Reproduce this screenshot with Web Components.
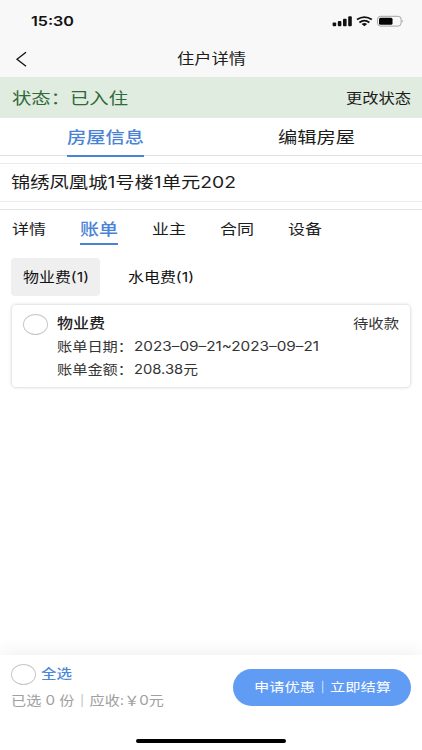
<!DOCTYPE html>
<html lang="zh-CN">
<head>
<meta charset="utf-8">
<title>住户详情</title>
<style>
  body {
    margin: 0;
    background: #fff;
    font-family: Inter, "Noto Sans CJK SC", sans-serif;
    color: #1c1c1c;
  }
</style>
</head>
<body>
<resident-page></resident-page>

<script>
const define = (name, html, setup) => {
  const template = document.createElement("template");
  template.innerHTML = html;
  customElements.define(name, class extends HTMLElement {
    connectedCallback() {
      if (this.shadowRoot) return;
      this.attachShadow({ mode: "open" });
      this.shadowRoot.appendChild(template.content.cloneNode(true));
      if (setup) setup(this, this.shadowRoot);
    }
  });
};

// One line of text, stretched sideways to fill the given width
define("wide-text", `
<style>
  :host { display: block; flex: none; line-height: 20px; height: 20px; }
  span { display: inline-block; white-space: pre; transform-origin: 0 50%; vertical-align: top; }
</style>
<span></span>
`, (host, root) => {
  const span = root.querySelector("span");
  const width = Number(host.getAttribute("width"));
  span.textContent = host.getAttribute("text");
  host.style.width = width + "px";
  host.style.fontSize = host.getAttribute("size") + "px";
  span.style.transform = `scaleX(${width / span.getBoundingClientRect().width})`;
});

define("round-check", `
<style>
  :host { display: block; flex: none; box-sizing: border-box; width: 25px; height: 21px; border: 1px solid #c8c8c8; border-radius: 50%; background: #fff; }
</style>
`);

define("phone-status", `
<style>
  :host { display: flex; justify-content: space-between; height: 41px; padding: 0 18px 0 31px; align-items: center; color: #111; }
  wide-text { font-weight: 600; }
  svg { display: block; }
</style>
<wide-text text="15:30" size="13" width="43"></wide-text>
<svg width="73" height="14" viewBox="0 0 73 14">
  <g fill="#111">
    <rect x="1.6" y="8.6" width="3.6" height="3.6" rx="1" />
    <rect x="6.8" y="7" width="3.6" height="5.2" rx="1" />
    <rect x="12" y="4.7" width="3.6" height="7.5" rx="1" />
    <rect x="17.2" y="2.3" width="3.6" height="9.9" rx="1" />
    <path d="M33.4 12.2 L30.6 10 Q33.4 8.2 36.2 10 Z" />
  </g>
  <g fill="none" stroke="#111" stroke-width="1.8">
    <path d="M26 5.6 Q33.4 .6 40.8 5.6" />
    <path d="M28.4 8.4 Q33.4 4.8 38.4 8.4" />
  </g>
  <rect x="46.5" y="2.3" width="23.6" height="9.8" rx="3" fill="none" stroke="#a6a6a6" />
  <rect x="48" y="3.7" width="13.5" height="7" rx="1.5" fill="#050505" />
  <path d="M71.3 5.5 Q73 7.1 71.3 8.7Z" fill="#999" />
</svg>
`);

define("nav-bar", `
<style>
  :host { display: grid; grid-template-columns: 1fr auto 1fr; align-items: center; height: 36px; padding: 0 15px; }
  svg { display: block; }
</style>
<svg width="13" height="16" viewBox="0 0 13 16">
  <path d="M11 1.2 L2 8.2 L11 15.2" fill="none" stroke="#111" stroke-width="1.3" />
</svg>
<wide-text text="住户详情" size="14.5" width="69"></wide-text>
`);

define("state-bar", `
<style>
  :host { display: flex; justify-content: space-between; align-items: center; height: 41px; padding: 0 11px 0 12px; background: #e0ecdf; }
  .state { color: #2f6a3b; }
</style>
<wide-text class="state" text="状态：已入住" size="16" width="116"></wide-text>
<wide-text text="更改状态" size="13.5" width="65"></wide-text>
`);

define("tab-item", `
<style>
  :host { display: flex; box-sizing: border-box; align-items: flex-start; border-bottom: 2px solid transparent; }
  :host([active]) { color: #4a83d6; border-color: #4a83d6; font-weight: 500; }
</style>
<slot></slot>
`);

define("house-tabs", `
<style>
  :host { display: grid; grid-template-columns: 1fr 1fr; justify-items: center; box-sizing: border-box; height: 38px; padding-top: 9px; border-bottom: 1px solid #e2e2e4; }
  tab-item { height: 30px; }
</style>
<tab-item active><wide-text text="房屋信息" size="16" width="77"></wide-text></tab-item>
<tab-item><wide-text text="编辑房屋" size="16" width="77"></wide-text></tab-item>
`);

define("house-name", `
<style>
  :host { display: flex; box-sizing: border-box; height: 39px; margin: 7px 0; padding: 0 11px 1px; align-items: center; border: solid #ebebed; border-width: 1px 0; }
</style>
<wide-text text="锦绣凤凰城1号楼1单元202" size="16" width="225"></wide-text>
`);

define("detail-tabs", `
<style>
  :host { display: flex; box-sizing: border-box; height: 37px; gap: 34px; padding: 9px 12px 0; border-top: 1px solid #e3e3e5; }
  tab-item { height: 26px; }
</style>
<tab-item><wide-text text="详情" size="14" width="34"></wide-text></tab-item>
<tab-item active><wide-text text="账单" size="16" width="38"></wide-text></tab-item>
<tab-item><wide-text text="业主" size="14" width="34"></wide-text></tab-item>
<tab-item><wide-text text="合同" size="14" width="34"></wide-text></tab-item>
<tab-item><wide-text text="设备" size="14" width="34"></wide-text></tab-item>
`);

define("fee-types", `
<style>
  :host { display: flex; gap: 16px; padding: 12px 11px 0; color: #111; }
  div { display: flex; box-sizing: border-box; width: 89px; height: 38px; padding: 0 0 1px 12px; align-items: center; border-radius: 4px; }
  .on { background: #efefef; }
</style>
<div class="on"><wide-text text="物业费(1)" size="13.5" width="66"></wide-text></div>
<div><wide-text text="水电费(1)" size="13.5" width="66"></wide-text></div>
`);

define("bill-card", `
<style>
  :host { display: grid; grid-template-columns: 34px 1fr; box-sizing: border-box; height: 84px; margin: 8px 11px 0; padding: 8px 11px 0; border: 1px solid #e9e9e9; border-radius: 5px; box-shadow: 0 0 3px rgba(0,0,0,.12); color: #343434; }
  round-check { margin-top: 1px; }
  .head { display: flex; justify-content: space-between; height: 23px; }
  .name { font-weight: 500; color: #222; }
  .line { display: flex; gap: 1px; height: 23px; }
</style>
<round-check></round-check>
<div>
  <div class="head">
    <wide-text class="name" text="物业费" size="13.5" width="48"></wide-text>
    <wide-text text="待收款" size="13" width="46"></wide-text>
  </div>
  <div class="line">
    <wide-text text="账单日期：" size="13" width="76"></wide-text>
    <wide-text text="2023–09–21~2023–09–21" size="13" width="185"></wide-text>
  </div>
  <div class="line">
    <wide-text text="账单金额：" size="13" width="76"></wide-text>
    <wide-text text="208.38元" size="13" width="64"></wide-text>
  </div>
</div>
`);

define("pay-bar", `
<style>
  :host { display: flex; justify-content: space-between; box-sizing: border-box; height: 95px; padding: 8px 11px 0; background: #fff; box-shadow: 0 -5px 15px rgba(0,0,0,.05); }
  .all { display: flex; gap: 5px; height: 27px; color: #4b87d9; }
  .all round-check { margin-top: 1px; }
  .all wide-text { font-weight: 500; }
  .sum { color: #a0a0a0; }
  .pay { display: flex; align-items: center; justify-content: center; width: 178px; height: 37px; margin-top: 6px; border-radius: 19px; background: #609bf4; color: #fff; }
</style>
<div>
  <div class="all">
    <round-check></round-check>
    <wide-text text="全选" size="13" width="31"></wide-text>
  </div>
  <wide-text class="sum" text="已选 0 份｜应收:￥0元" size="13" width="153"></wide-text>
</div>
<div class="pay"><wide-text text="申请优惠｜立即结算" size="12.5" width="137"></wide-text></div>
`);

define("resident-page", `
<style>
  :host { display: flex; flex-direction: column; position: relative; width: 422px; height: 750px; overflow: hidden; background: #fff; }
  header { background: #f8f8f8; }
  main { flex: 1; }
  .home { position: absolute; left: 136px; bottom: 7px; width: 150px; height: 4px; border-radius: 2px; background: #000; }
</style>
<header>
  <phone-status></phone-status>
  <nav-bar></nav-bar>
</header>
<main>
  <state-bar></state-bar>
  <house-tabs></house-tabs>
  <house-name></house-name>
  <detail-tabs></detail-tabs>
  <fee-types></fee-types>
  <bill-card></bill-card>
</main>
<pay-bar></pay-bar>
<div class="home"></div>
`);
</script>
</body>
</html>
